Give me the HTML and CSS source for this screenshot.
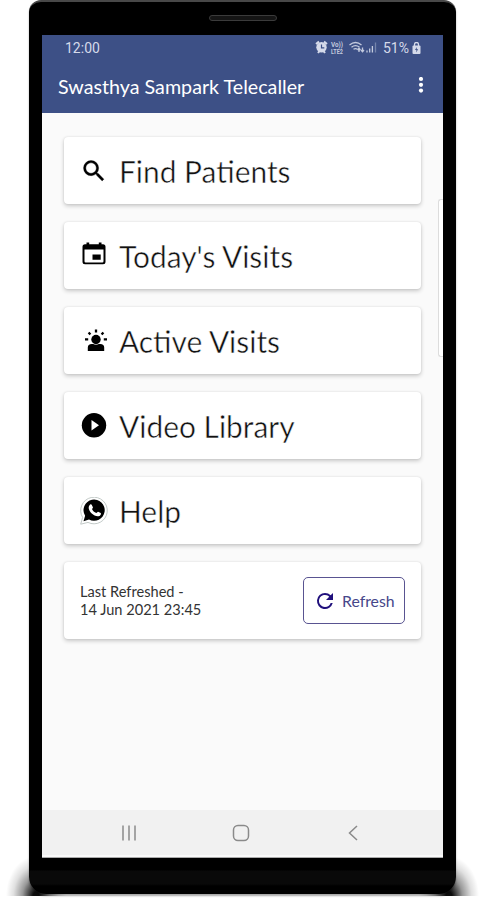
FILE: index.html
```
<!DOCTYPE html>
<html lang="en">

<head>
    <meta charset="UTF-8">
    <meta name="viewport" content="width=device-width, initial-scale=1.0">
    <title>Swasthya Sampark Telecaller</title>
    <link rel="stylesheet" href="styles.css">
</head>

<body>
    <div class="stage">
        <div class="floor-shadow left"></div>
        <div class="floor-shadow right"></div>
        <div class="phone">
            <div class="speaker"></div>
            <div class="screen">
                <!-- Status bar -->
                <div class="status-bar">
                    <span class="time">12:00</span>
                    <svg class="status-icons" width="64" height="16" viewBox="0 0 64 16">
                        <path d="M1 4l3-2.4M12 4L9 1.6M3 13l1.500-2M10 13l-1.500-2" stroke="#d5daea" stroke-width="2"/>
                        <circle cx="6.500" cy="7.300" r="5.200" fill="#d5daea"/>
                        <path d="M6.500 4.500v3.400h2.800" fill="none" stroke="#3d5086" stroke-width="1.200"/>
                        <text x="16" y="7.300" textLength="12" lengthAdjust="spacingAndGlyphs">Vo))</text>
                        <text x="16" y="14" textLength="12" lengthAdjust="spacingAndGlyphs">LTE2</text>
                        <g fill="none" stroke="#c3cade" stroke-width="1.300">
                            <path d="M34.500 5q6-5 12 0M36.500 7.200q4-3.200 8 0M38.500 9.300q2-1.500 4 0"/>
                            <path d="M44 12V8.500M42.500 10l1.500-1.700 1.500 1.700M47.500 7.500v4M46 10l1.500 1.700 1.500-1.700"/>
                            <path d="M52 12.500v-2M54.700 12.500V8.500M57.400 12.500V6"/>
                            <path d="M60.500 12.500v-10" stroke="#7584ab"/>
                        </g>
                    </svg>
                    <span class="battery">51%</span>
                    <svg width="9" height="13" viewBox="0 0 9 13">
                        <path d="M2.500 5V2.500a2 2 0 0 1 4 0V5" fill="none" stroke="#d5daea" stroke-width="1.300"/>
                        <rect x=".5" y="3.500" width="8" height="8.500" rx="1" fill="#d5daea"/>
                        <path d="M4.800 5L3 8h1.500L4 10.500l2.200-3.200H4.700z" fill="#3d5086"/>
                    </svg>
                </div>

                <!-- App bar -->
                <div class="app-bar">
                    <h1>Swasthya Sampark Telecaller</h1>
                    <svg width="6" height="18" viewBox="0 0 6 18" fill="#fff">
                        <circle cx="3" cy="2" r="2.100"/>
                        <circle cx="3" cy="7.800" r="2.100"/>
                        <circle cx="3" cy="13.600" r="2.100"/>
                    </svg>
                </div>

                <div class="content">
                    <div class="card">
                        <svg width="28" height="28" viewBox="0 0 24 24">
                            <path stroke="#000" stroke-width=".3" d="M15.500 14h-.79l-.28-.27A6.471 6.471 0 0 0 16 9.500 6.500 6.500 0 1 0 9.500 16c1.610 0 3.090-.59 4.230-1.570l.27.28v.79l5 4.990L20.490 19l-4.990-5zm-6 0C7.010 14 5 11.990 5 9.500S7.010 5 9.500 5 14 7.010 14 9.500 11.990 14 9.500 14z"/>
                        </svg>
                        <span>Find Patients</span>
                    </div>
                    <div class="card">
                        <svg width="28" height="28" viewBox="0 0 28 28">
                            <path fill-rule="evenodd" d="M5 2.200h1.500V.5h2.700v1.700h9.600V.5h2.700v1.700H23a2.500 2.500 0 0 1 2.500 2.500v15A2.500 2.500 0 0 1 23 22.200H5a2.500 2.500 0 0 1-2.500-2.500v-15A2.500 2.500 0 0 1 5 2.200zM4.500 7.600v11.600a1.200 1.200 0 0 0 1.200 1.200h16.600a1.200 1.200 0 0 0 1.200-1.200V7.600zM12.500 12.400h8.200v5.400h-8.200z"/>
                        </svg>
                        <span>Today's Visits</span>
                    </div>
                    <div class="card">
                        <svg width="28" height="28" viewBox="0 0 28 28">
                            <circle cx="16" cy="12.500" r="4.700"/>
                            <path d="M7.800 24v-3.500q0-3.500 4-3.500h1.400q2.800 1.300 5.600 0h1.400q4 0 4 3.500V24z"/>
                            <path d="M16 2.500v3M8.600 5.500l1.800 2M23.400 5.500l-1.800 2M5 12.300h3.200M23.800 12.300h3.200" stroke="#000" stroke-width="2.300"/>
                        </svg>
                        <span>Active Visits</span>
                    </div>
                    <div class="card">
                        <svg width="28" height="28" viewBox="0 0 28 28">
                            <circle cx="14" cy="13.300" r="12.200"/>
                            <path d="M11.500 8v10.600l7.500-5.300z" fill="#fff"/>
                        </svg>
                        <span>Video Library</span>
                    </div>
                    <div class="card">
                        <svg width="28" height="28" viewBox="0 0 28 28">
                            <path d="M.7 27.200l1.900-6.800A13.300 13.300 0 1 1 8 25.400z" fill="#fff" stroke="#bcc4c2" stroke-width=".9"/>
                            <path d="M3.500 24.200l1.600-5.400a10.600 10.600 0 1 1 3.900 3.700z"/>
                            <path d="M10.200 7.600c.5-.5 1.200-.4 1.500.2l1.200 2.500c.2.500-.8 1.400-.9 1.800.7 1.900 2.300 3.300 4.300 4 .5-.1 1.300-1.500 1.800-1.300l2.600 1.300c.7.500-.2 2.500-1.400 3-4.700 1.500-10.900-4.700-10.600-8.600.1-1.400.8-2.300 1.500-2.900z" fill="#fff"/>
                        </svg>
                        <span>Help</span>
                    </div>

                    <div class="card refresh-card">
                        <p>Last Refreshed -<br>14 Jun 2021 23:45</p>
                        <button class="refresh-btn">
                            <svg width="24" height="24" viewBox="0 0 24 24">
                                <path d="M17.650 6.350A7.958 7.958 0 0 0 12 4a8 8 0 1 0 7.730 10h-2.080A5.990 5.990 0 0 1 12 18a6 6 0 1 1 4.220-10.220L13 11h7V4l-2.350 2.350z"/>
                            </svg>
                            <span>Refresh</span>
                        </button>
                    </div>
                </div>

                <div class="edge-handle"></div>

                <!-- System navigation -->
                <div class="nav-bar">
                    <svg width="18" height="18" viewBox="0 0 18 18">
                        <path d="M3 1.500v15M9 1.500v15M15 1.500v15"/>
                    </svg>
                    <svg width="18" height="18" viewBox="0 0 18 18">
                        <rect x="1.500" y="1.500" width="15" height="15" rx="4.500"/>
                    </svg>
                    <svg width="18" height="18" viewBox="0 0 18 18">
                        <path d="M13 2L5.500 9l7.500 7"/>
                    </svg>
                </div>
            </div>
        </div>
    </div>
</body>

</html>
```
FILE: styles.css
```
* {
    box-sizing: border-box;
}

body {
    margin: 0;
    background: #fff;
    font-family: Lato, "Liberation Sans", sans-serif;
}

svg {
    display: block;
    flex: none;
}

.stage {
    position: relative;
    width: 483px;
    height: 900px;
    padding-left: 29px;
    overflow: hidden;
}

.floor-shadow {
    position: absolute;
    top: 856px;
    width: 60px;
    height: 40px;
    background: radial-gradient(ellipse 30px 40px at 50% 100%, rgba(0, 0, 0, 0.95) 10%, rgba(0, 0, 0, 0.4) 45%, rgba(0, 0, 0, 0.12) 75%, transparent 100%);
}

.floor-shadow.left {
    left: 6px;
}

.floor-shadow.right {
    left: 419px;
}

.phone {
    position: relative;
    display: flex;
    flex-direction: column;
    width: 427px;
    height: 894px;
    padding: 15px 13px 0;
    border-top: 2px solid #484848;
    border-radius: 12px 12px 17px 17px;
    background: linear-gradient(#000 868px, #090909 869px, #090909 882px, #000 884px);
    box-shadow: 0 2px 2px rgba(0, 0, 0, 0.35);
}

.speaker {
    align-self: center;
    width: 68px;
    height: 6px;
    margin: -2px 0 14px;
    border: 1px solid #3b3b3b;
    border-radius: 3px;
    background: #151515;
}

.screen {
    position: relative;
    display: flex;
    flex-direction: column;
    height: 823px;
    background: #fafafa;
    border-bottom: 1px solid #aaa;
}

.status-bar {
    display: flex;
    align-items: center;
    height: 26px;
    padding: 0 22px 0 23px;
    background: #3d5086;
    color: #d5daea;
    font-family: Roboto, "Liberation Sans", sans-serif;
    font-size: 14px;
}

.time {
    margin-right: auto;
}

.status-icons text {
    fill: #c3cade;
    font: bold 7px Roboto, sans-serif;
}

.battery {
    margin: 0 3px 0 4px;
}

.app-bar {
    display: flex;
    align-items: center;
    justify-content: space-between;
    height: 52px;
    padding: 0 19px 2px 16px;
    background: #3d5086;
}

.app-bar h1 {
    margin: 0;
    color: #fff;
    font-size: 19.7px;
    font-weight: 400;
}

.content {
    display: flex;
    flex: 1;
    flex-direction: column;
    gap: 18px;
    padding: 24px 22px 0;
}

.card {
    display: flex;
    align-items: center;
    gap: 11px;
    height: 67px;
    padding: 0 16px;
    border-radius: 4px;
    background: #fff;
    box-shadow: 0 2px 4px rgba(0, 0, 0, 0.2), 0 0 2px rgba(0, 0, 0, 0.1);
    color: #111;
    font-size: 29.9px;
    white-space: nowrap;
}

/* thins the menu labels a little */
.card > span {
    -webkit-text-stroke: 0.5px #fff;
}

.refresh-card {
    justify-content: space-between;
    height: 77px;
}

.refresh-card p {
    margin: 0;
    color: #333;
    font-size: 14.6px;
    line-height: 18px;
}

.refresh-btn {
    display: flex;
    align-items: center;
    gap: 5px;
    width: 102px;
    height: 47px;
    padding: 0 0 0 9px;
    border: 1px solid #595491;
    border-radius: 5px;
    background: #fff;
    color: #47478a;
    font: 15.8px Lato, sans-serif;
}

.refresh-btn svg {
    fill: #20107c;
}

/* edge panel handle on the right side of the screen */
.edge-handle {
    position: absolute;
    top: 164px;
    right: 0;
    width: 5px;
    height: 158px;
    border: 1px solid #ddd;
    border-right: 0;
    border-radius: 3px 0 0 3px;
    background: #fff;
}

.nav-bar {
    display: flex;
    align-items: center;
    justify-content: space-between;
    height: 47px;
    padding: 0 81px 0 78px;
    border-bottom: 2px solid #fafafa;
    background: #f1f1f1;
}

.nav-bar svg {
    fill: none;
    stroke: #8a8a8a;
    stroke-width: 1.5;
}
```
